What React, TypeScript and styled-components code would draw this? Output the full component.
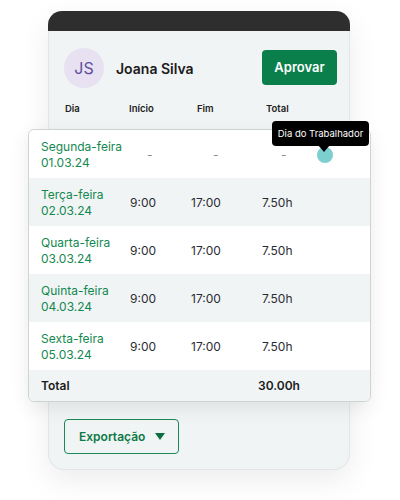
import styled, { createGlobalStyle } from 'styled-components';

const Global = createGlobalStyle`
  body {
    margin: 0;
    background: #ffffff;
    font-family: Inter, "Noto Sans", sans-serif;
    color: #1f2326;
  }
`;

const Page = styled.div`
  width: 400px;
  height: 500px;
  padding: 11px 0 0 48px;
  box-sizing: border-box;
  overflow: hidden;
`;

const Card = styled.div`
  width: 302px;
  height: 459px;
  box-sizing: border-box;
  background: #f1f4f5;
  border: 1px solid #e2e6e8;
  border-top: none;
  border-radius: 16px;
  box-shadow: 0 10px 30px rgba(0, 0, 0, 0.08);
  overflow: visible;
`;

const TopBar = styled.div`
  height: 20px;
  margin: 0 -1px;
  background: #2e2e2e;
  border-radius: 14px 14px 0 0;
`;

const Body = styled.div`
  padding: 17px 14px 0 15px;
`;

const Head = styled.div`
  display: flex;
  align-items: center;
  height: 40px;
  gap: 12px;
`;

const Avatar = styled.div`
  width: 40px;
  height: 40px;
  border-radius: 50%;
  background: #e8e1f1;
  color: #5d4f9e;
  display: flex;
  align-items: center;
  justify-content: center;
  font-size: 16px;
`;

const Name = styled.div`
  flex: 1;
  font-size: 14px;
  font-weight: 600;
  color: #1b1b1b;
`;

const Approve = styled.button`
  width: 75px;
  height: 35px;
  margin-top: -2px;
  margin-right: -2px;
  border: none;
  border-radius: 4px;
  background: #0a7f4b;
  color: #fff;
  font-family: inherit;
  font-size: 13px;
  font-weight: 600;
`;

const Cols = styled.div`
  display: grid;
  grid-template-columns: 64px 68px 69px 1fr;
  padding-left: 1px;
  margin-top: 15px;
  height: 26px;
  font-size: 9.5px;
  font-weight: 600;
  color: #222;
`;

const Table = styled.div`
  position: relative;
  margin: 0 -36px;
  background: #fff;
  border: 1px solid #cfd3d6;
  border-radius: 6px;
  box-shadow: 0 6px 20px rgba(0, 0, 0, 0.08);
  overflow: visible;
`;

const Row = styled.div<{ $shade?: boolean; $first?: boolean; $last?: boolean }>`
  display: grid;
  grid-template-columns: 89px 61px 71px 1fr;
  align-items: center;
  height: ${(p) => (p.$last ? 31 : 48)}px;
  padding-left: 12px;
  background: ${(p) => (p.$shade ? '#f1f4f5' : '#fff')};
  border-radius: ${(p) => (p.$first ? '6px 6px 0 0' : p.$last ? '0 0 6px 6px' : '0')};
  font-size: 12px;
  color: #2a2d30;
`;

const Day = styled.div`
  color: #13884f;
  font-size: 12px;
  line-height: 16px;
  padding-top: 2px;
`;

const Cell = styled.div<{ $dash?: number }>`
  padding-left: ${(p) => p.$dash ?? 0}px;
  color: ${(p) => (p.$dash ? '#8a8f94' : '#2a2d30')};
`;

const TotalCell = styled.div<{ $shift?: number }>`
  margin-left: ${(p) => p.$shift ?? 0}px;
  font-weight: 600;
  color: #1b1b1b;
`;

const Holiday = styled.div`
  position: absolute;
  left: 288px;
  top: 17px;
  width: 16px;
  height: 16px;
  border-radius: 50%;
  background: #7dcfcf;
`;

const Tip = styled.div`
  position: absolute;
  right: 1px;
  top: -9px;
  width: 97px;
  height: 25px;
  box-sizing: border-box;
  background: #000;
  color: #fff;
  border-radius: 4px;
  font-size: 9.5px;
  display: flex;
  align-items: center;
  justify-content: center;

  &::after {
    content: '';
    position: absolute;
    left: 46px;
    bottom: -6px;
    border-left: 6px solid transparent;
    border-right: 6px solid transparent;
    border-top: 7px solid #000;
  }
`;

const Export = styled.button`
  margin-top: 17px;
  width: 115px;
  height: 35px;
  background: transparent;
  border: 1px solid #1b8a57;
  border-radius: 4px;
  color: #0d7a45;
  font-family: inherit;
  font-size: 12px;
  font-weight: 600;
  display: flex;
  align-items: center;
  gap: 10px;
  padding: 0 0 0 14px;
`;

const days = [
  { name: 'Terça-feira', date: '02.03.24' },
  { name: 'Quarta-feira', date: '03.03.24' },
  { name: 'Quinta-feira', date: '04.03.24' },
  { name: 'Sexta-feira', date: '05.03.24' },
];

export default function App() {
  return (
    <Page>
      <Global />
      <Card>
        <TopBar />
        <Body>
          <Head>
            <Avatar>JS</Avatar>
            <Name>Joana Silva</Name>
            <Approve>Aprovar</Approve>
          </Head>
          <Cols>
            <div>Dia</div>
            <div>Início</div>
            <div>Fim</div>
            <div>Total</div>
          </Cols>
          <Table>
            <Row $first>
              <Day>
                Segunda-feira
                <br />
                01.03.24
              </Day>
              <Cell $dash={17}>-</Cell>
              <Cell $dash={22}>-</Cell>
              <Cell $dash={19}>-</Cell>
            </Row>
            <Holiday />
            <Tip>Dia do Trabalhador</Tip>
            {days.map((d, i) => (
              <Row key={d.date} $shade={i % 2 === 0}>
                <Day>
                  {d.name}
                  <br />
                  {d.date}
                </Day>
                <Cell>9:00</Cell>
                <Cell>17:00</Cell>
                <Cell>7.50h</Cell>
              </Row>
            ))}
            <Row $shade $last>
              <TotalCell>Total</TotalCell>
              <div />
              <div />
              <TotalCell $shift={-4}>30.00h</TotalCell>
            </Row>
          </Table>
          <Export>
            Exportação
            <svg width="10" height="7" viewBox="0 0 10 7">
              <path d="M0 0h10L5 7z" fill="#0d6e3f" />
            </svg>
          </Export>
        </Body>
      </Card>
    </Page>
  );
}
